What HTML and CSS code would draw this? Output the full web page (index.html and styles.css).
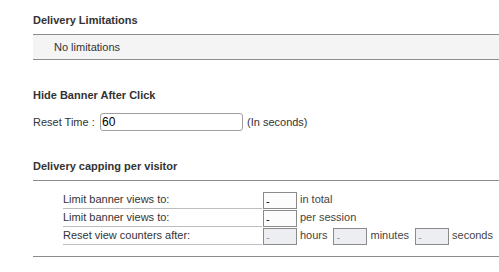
FILE: index.html
```html
<!DOCTYPE html>
<html>
<head>
<meta charset="utf-8">
<link rel="stylesheet" href="styles.css">
</head>
<body>
<div class="page">
  <div class="section-head first">Delivery Limitations</div>
  <div class="box">No limitations</div>

  <div class="plain-head">Hide Banner After Click</div>
  <div class="reset-row">
    <span class="label">Reset Time :</span>
    <input class="text-input" type="text" value="60">
    <span class="hint">(In seconds)</span>
  </div>

  <div class="section-head">Delivery capping per visitor</div>
  <div class="cap-table">
    <div class="cap-row">
      <div class="cap-label">Limit banner views to:</div>
      <div class="cap-field"><input class="small-input" type="text" value="-"><span class="unit">in total</span></div>
    </div>
    <div class="cap-row">
      <div class="cap-label">Limit banner views to:</div>
      <div class="cap-field"><input class="small-input" type="text" value="-"><span class="unit">per session</span></div>
    </div>
    <div class="cap-row">
      <div class="cap-label">Reset view counters after:</div>
      <div class="cap-field">
        <input class="small-input disabled" type="text" value="-" disabled><span class="unit">hours</span>
        <input class="small-input disabled" type="text" value="-" disabled><span class="unit">minutes</span>
        <input class="small-input disabled" type="text" value="-" disabled><span class="unit">seconds</span>
      </div>
    </div>
  </div>
  <div class="end-line"></div>
</div>
</body>
</html>
```
FILE: styles.css
```css
html, body {
  margin: 0;
  padding: 0;
  background: #fff;
}
body {
  font-family: "Liberation Sans", Arial, sans-serif;
  font-size: 11px;
  color: #333;
}
.page {
  padding-left: 33px;
}
.section-head {
  font-weight: bold;
  line-height: 14px;
  margin-top: 28px;
  padding-bottom: 7px;
  border-bottom: 1px solid #8c8c8c;
}
.section-head.first {
  margin-top: 0;
  padding-top: 13px;
}
.box {
  background: #f4f4f4;
  height: 24px;
  line-height: 24px;
  padding-left: 21px;
  border-bottom: 1px solid #8c8c8c;
}
.plain-head {
  font-weight: bold;
  line-height: 14px;
  margin-top: 28px;
}
.reset-row {
  margin-top: 11px;
  display: flex;
  align-items: center;
  height: 18px;
}
.label {
  width: 67px;
}
.text-input {
  box-sizing: border-box;
  width: 143px;
  height: 18px;
  margin: 0;
  padding: 0 1px;
  border: 1px solid #a0a0a0;
  border-radius: 3px;
  background: #fff;
  font-family: "Liberation Sans", Arial, sans-serif;
  font-size: 12px;
  color: #000;
  outline: none;
}
.hint {
  margin-left: 4px;
}
.cap-table {
  margin-left: 30px;
  padding-top: 10px;
  display: flex;
  flex-direction: column;
}
.cap-row {
  display: flex;
  height: 18px;
}
.cap-label {
  box-sizing: border-box;
  width: 199px;
  height: 18px;
  line-height: 17px;
  border-bottom: 1px solid #bdbdbd;
}
.cap-field {
  display: flex;
  align-items: flex-start;
  padding-left: 1px;
  line-height: 17px;
}
.small-input {
  box-sizing: border-box;
  width: 34px;
  height: 17px;
  margin: 1px 3px 0 0;
  padding: 0 2px;
  border: 1px solid #8a8a8a;
  border-radius: 0;
  background: #fcfcfc;
  font-family: "Liberation Sans", Arial, sans-serif;
  font-size: 11px;
  color: #000;
  outline: none;
}
.small-input.disabled {
  background: #eceef1;
  color: #999;
}
.unit {
  margin-right: 6px;
  color: #444;
}
.end-line {
  margin-top: 11px;
  border-top: 1px solid #8c8c8c;
}
```
